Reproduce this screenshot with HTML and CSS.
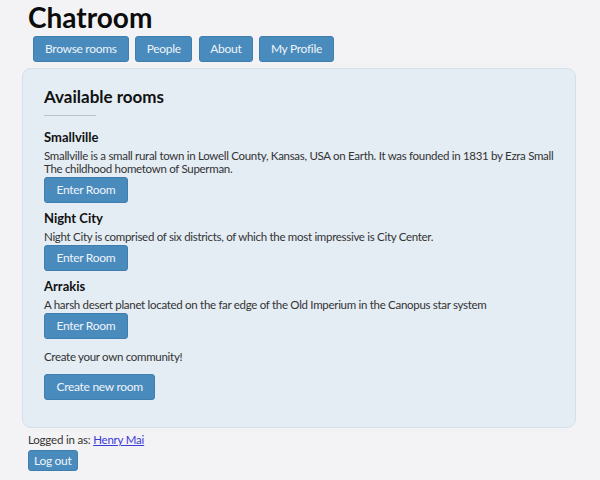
FILE: index.html
```html
<!DOCTYPE html>
<html lang="en">
<head>
<meta charset="utf-8">
<title>Chatroom</title>
<link rel="stylesheet" href="styles.css">
</head>
<body>
<div class="page">
  <h1 class="site-title">Chatroom</h1>
  <nav class="nav">
    <a class="btn nav-btn" href="#">Browse rooms</a>
    <a class="btn nav-btn" href="#">People</a>
    <a class="btn nav-btn" href="#">About</a>
    <a class="btn nav-btn" href="#">My Profile</a>
  </nav>
  <main class="card">
    <h2 class="card-title">Available rooms</h2>
    <div class="rule"></div>
    <section class="room">
      <h3 class="room-name">Smallville</h3>
      <p class="room-desc">Smallville is a small rural town in Lowell County, Kansas, USA on Earth. It was founded in 1831 by Ezra Small<br>The childhood hometown of Superman.</p>
      <a class="btn room-btn" href="#">Enter Room</a>
    </section>
    <section class="room">
      <h3 class="room-name">Night City</h3>
      <p class="room-desc">Night City is comprised of six districts, of which the most impressive is City Center.</p>
      <a class="btn room-btn" href="#">Enter Room</a>
    </section>
    <section class="room">
      <h3 class="room-name">Arrakis</h3>
      <p class="room-desc">A harsh desert planet located on the far edge of the Old Imperium in the Canopus star system</p>
      <a class="btn room-btn" href="#">Enter Room</a>
    </section>
    <p class="create-text">Create your own community!</p>
    <a class="btn room-btn" href="#">Create new room</a>
  </main>
  <footer class="footer">
    <p class="login">Logged in as: <a class="user-link" href="#">Henry Mai</a></p>
    <a class="btn small-btn" href="#">Log out</a>
  </footer>
</div>
</body>
</html>
```

FILE: styles.css
```css
* { box-sizing: border-box; }
html, body { margin: 0; padding: 0; }
body {
  background: #f3f2f4;
  font-family: Lato, "Noto Sans", sans-serif;
  color: #2b2b2b;
  width: 600px;
  height: 480px;
  overflow: hidden;
}
.page {
  padding: 0 24px 0 22px;
}
.site-title {
  margin: 0 0 0 6px;
  padding-top: 1px;
  font-size: 28px;
  line-height: 32px;
  font-weight: 700;
  color: #0c0c0c;
}
.nav {
  display: flex;
  gap: 6.5px;
  margin: 3px 0 0 11px;
}
.btn {
  display: inline-block;
  background: #4a8bbd;
  color: #eef4fa;
  text-decoration: none;
  border: 1px solid #3f7fb0;
  border-radius: 3px;
  font-size: 12px;
  letter-spacing: -0.3px;
}
.nav-btn {
  height: 26px;
  line-height: 24px;
  padding: 0 10.5px;
}
.nav-btn:first-child {
  padding: 0 11px;
}
.card {
  display: block;
  margin-top: 6px;
  background: #e4ecf4;
  border: 1px solid #d6e0ea;
  border-radius: 9px;
  padding: 17px 20px 26px 21px;
  height: 360px;
}
.card-title {
  margin: 0;
  font-size: 17px;
  line-height: 22px;
  font-weight: 700;
  color: #111;
}
.rule {
  width: 52px;
  height: 1px;
  background: #b8c2cc;
  margin: 7px 0 12px;
}
.room {
  margin-bottom: 6px;
}
.room-name {
  margin: 0;
  font-size: 13px;
  line-height: 18px;
  font-weight: 700;
  color: #111;
}
.room-desc {
  margin: 3px 0 2px;
  font-size: 11.5px;
  line-height: 13px;
  letter-spacing: -0.3px;
  color: #333;
}
.room-btn {
  height: 26px;
  line-height: 24px;
  padding: 0 11.5px;
}
.create-text {
  margin: 11px 0 10px;
  font-size: 11.5px;
  line-height: 14px;
  letter-spacing: -0.3px;
  color: #333;
}
.footer {
  padding-left: 6px;
  padding-top: 5px;
}
.login {
  margin: 0 0 2px;
  font-size: 11.5px;
  line-height: 14px;
  letter-spacing: -0.2px;
  color: #333;
}
.user-link {
  color: #3b3bd8;
}
.small-btn {
  height: 21px;
  line-height: 19px;
  padding: 0 5px;
  font-size: 12px;
}
```
